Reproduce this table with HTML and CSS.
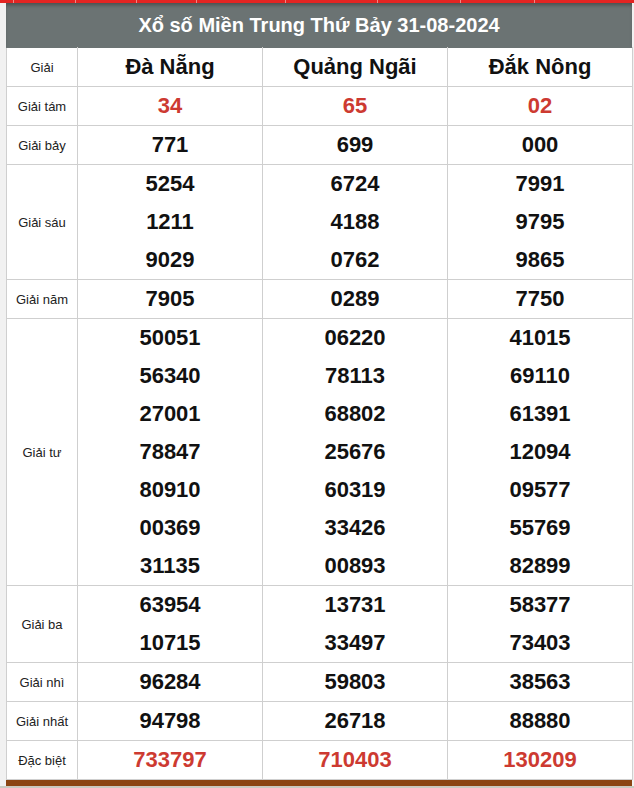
FILE: index.html
```html
<!DOCTYPE html>
<html lang="vi">
<head>
<meta charset="utf-8">
<title>Xổ số Miền Trung Thứ Bảy 31-08-2024</title>
<link rel="stylesheet" href="styles.css">
</head>
<body>
<nav class="topbar">
  <span class="nav-item w14"></span>
  <span class="nav-item w62"></span>
  <span class="nav-item w61"></span>
  <span class="nav-item w60"></span>
  <span class="nav-item w89"></span>
  <span class="nav-item w92"></span>
  <span class="nav-item w83"></span>
  <span class="nav-item w74"></span>
  <span class="nav-item rest"></span>
</nav>
<main class="wrap">
  <h1 class="title">Xổ số Miền Trung Thứ Bảy 31-08-2024</h1>
  <table class="kq">
    <colgroup>
      <col class="c-label">
      <col class="c-prov">
      <col class="c-prov">
      <col class="c-prov">
    </colgroup>
    <thead>
      <tr>
        <th class="label">Giải</th>
        <th class="prov">Đà Nẵng</th>
        <th class="prov">Quảng Ngãi</th>
        <th class="prov">Đắk Nông</th>
      </tr>
    </thead>
    <tbody>
      <tr>
        <td class="label">Giải tám</td>
        <td class="num red"><div>34</div></td>
        <td class="num red"><div>65</div></td>
        <td class="num red"><div>02</div></td>
      </tr>
      <tr>
        <td class="label">Giải bảy</td>
        <td class="num"><div>771</div></td>
        <td class="num"><div>699</div></td>
        <td class="num"><div>000</div></td>
      </tr>
      <tr>
        <td class="label">Giải sáu</td>
        <td class="num"><div>5254</div><div>1211</div><div>9029</div></td>
        <td class="num"><div>6724</div><div>4188</div><div>0762</div></td>
        <td class="num"><div>7991</div><div>9795</div><div>9865</div></td>
      </tr>
      <tr>
        <td class="label">Giải năm</td>
        <td class="num"><div>7905</div></td>
        <td class="num"><div>0289</div></td>
        <td class="num"><div>7750</div></td>
      </tr>
      <tr>
        <td class="label">Giải tư</td>
        <td class="num"><div>50051</div><div>56340</div><div>27001</div><div>78847</div><div>80910</div><div>00369</div><div>31135</div></td>
        <td class="num"><div>06220</div><div>78113</div><div>68802</div><div>25676</div><div>60319</div><div>33426</div><div>00893</div></td>
        <td class="num"><div>41015</div><div>69110</div><div>61391</div><div>12094</div><div>09577</div><div>55769</div><div>82899</div></td>
      </tr>
      <tr>
        <td class="label">Giải ba</td>
        <td class="num"><div>63954</div><div>10715</div></td>
        <td class="num"><div>13731</div><div>33497</div></td>
        <td class="num"><div>58377</div><div>73403</div></td>
      </tr>
      <tr>
        <td class="label">Giải nhì</td>
        <td class="num"><div>96284</div></td>
        <td class="num"><div>59803</div></td>
        <td class="num"><div>38563</div></td>
      </tr>
      <tr>
        <td class="label">Giải nhất</td>
        <td class="num"><div>94798</div></td>
        <td class="num"><div>26718</div></td>
        <td class="num"><div>88880</div></td>
      </tr>
      <tr>
        <td class="label">Đặc biệt</td>
        <td class="num red"><div>733797</div></td>
        <td class="num red"><div>710403</div></td>
        <td class="num red"><div>130209</div></td>
      </tr>
    </tbody>
  </table>
  <div class="footer-bar"></div>
</main>
</body>
</html>
```
FILE: styles.css
```css
html, body {
  margin: 0;
  padding: 0;
}
body {
  background: #c9cac1;
  font-family: "Liberation Sans", Arial, sans-serif;
  color: #111;
  width: 634px;
  height: 788px;
  overflow: hidden;
}
.topbar {
  display: flex;
  height: 3px;
  background: #e32422;
}
.nav-item {
  height: 3px;
  border-right: 1px solid #f08a86;
  box-sizing: border-box;
  flex: none;
}
.w14 { width: 14px; }
.w62 { width: 62px; }
.w61 { width: 61px; }
.w60 { width: 60px; }
.w89 { width: 89px; }
.w92 { width: 92px; }
.w83 { width: 83px; }
.w74 { width: 74px; }
.rest { flex: 1; border-right: none; }

.wrap {
  background: #f1f1f1;
  padding: 0 2px 0 6px;
  border-left: 0;
  height: 783px;
  box-sizing: border-box;
  display: flex;
  flex-direction: column;
}
.title {
  margin: 0;
  height: 44px;
  background: #6b7373;
  box-shadow: inset 0 4px 4px -2px rgba(0, 0, 0, 0.35);
  color: #fff;
  font-size: 20px;
  font-weight: bold;
  text-align: center;
  line-height: 44px;
}
.kq {
  width: 626px;
  border-collapse: collapse;
  table-layout: fixed;
  background: #fff;
}
.c-label { width: 71px; }
.c-prov { width: 185px; }
.kq th, .kq td {
  border: 1px solid #cfcfcf;
  padding: 0;
  text-align: center;
  vertical-align: middle;
}
.kq thead th {
  border-top-color: #6b7373;
}
.label {
  font-size: 13px;
  font-weight: normal;
  color: #222;
}
.prov {
  font-size: 22px;
  font-weight: bold;
  color: #111;
  height: 38px;
}
.num div {
  height: 38px;
  line-height: 38px;
  font-size: 22px;
  font-weight: bold;
  color: #111;
}
.num.red div {
  color: #cd3a31;
}
.footer-bar {
  width: 626px;
  height: 6px;
  background: #8b4513;
}
```
